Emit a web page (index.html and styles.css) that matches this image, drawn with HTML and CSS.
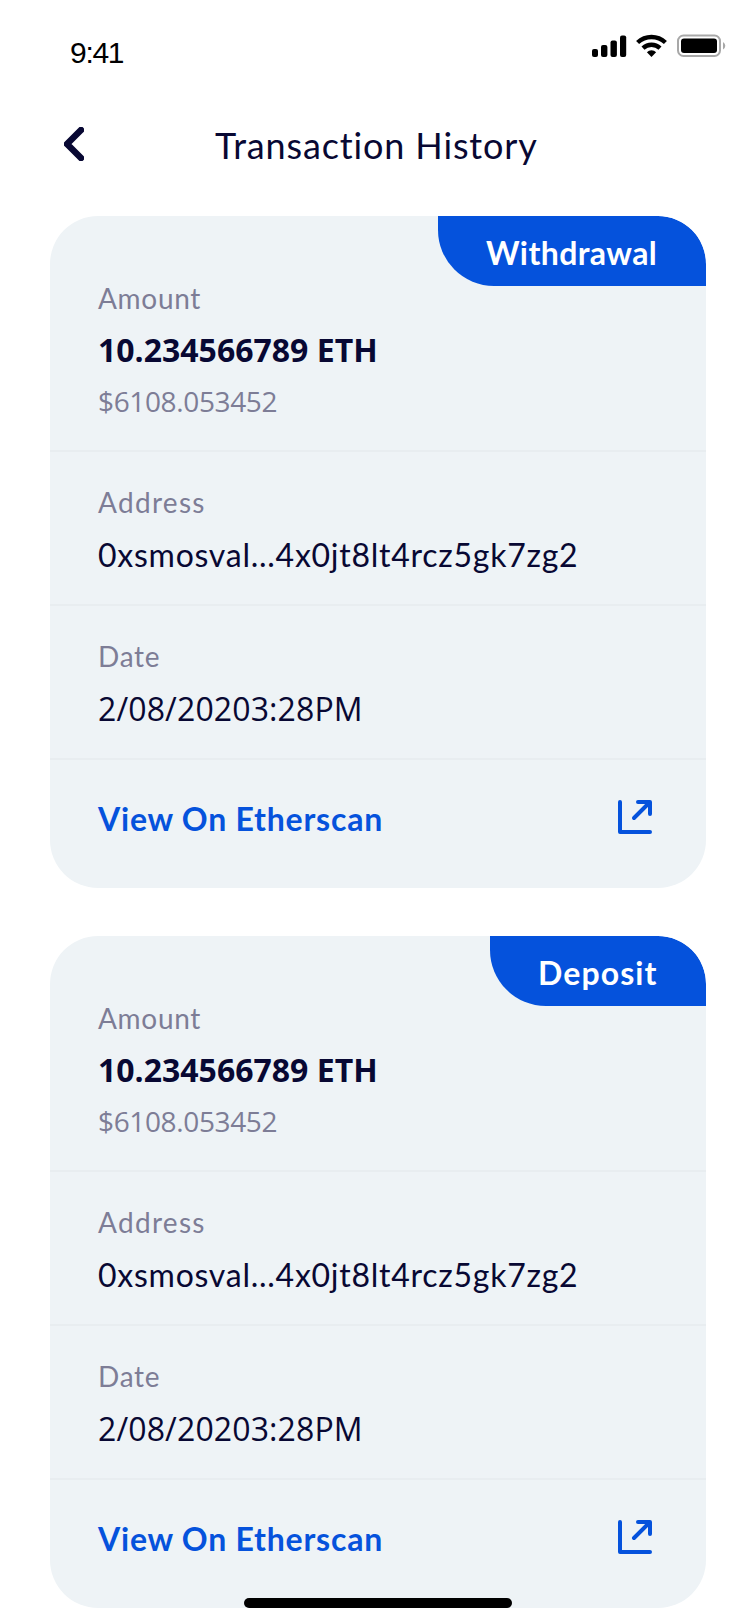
FILE: index.html
```html
<!DOCTYPE html>
<html lang="en">
<head>
<meta charset="utf-8">
<title>Transaction History</title>
<link rel="stylesheet" href="styles.css">
</head>
<body>
<div class="screen">
  <div class="status">
    <span class="time">9:41</span>
    <svg class="status-icons" width="136" height="28" viewBox="0 0 136 28">
      <rect x="2" y="17" width="6" height="8" rx="2"/>
      <rect x="11" y="13" width="6.4" height="12" rx="2"/>
      <rect x="20.5" y="8.500" width="6.4" height="16.500" rx="2"/>
      <rect x="30" y="3.500" width="6.200" height="21.500" rx="2"/>
      <g fill="none" stroke="#000" stroke-width="4.400">
        <path d="M47.600 10.500a20.300 20.300 0 0 1 27.800 0"/>
        <path d="M53 16.100a12.500 12.500 0 0 1 17 0"/>
      </g>
      <path d="M61.500 24.900l-4.600-4.700a6.500 6.500 0 0 1 9.200 0z"/>
      <rect x="88" y="3.500" width="42" height="20.500" rx="5.500" fill="none" stroke="#a8a8a8" stroke-width="2"/>
      <rect x="91" y="6.500" width="36" height="14.500" rx="3"/>
      <path d="M133 10q2.300 1.500 2.300 3.800t-2.300 3.800z" fill="#a8a8a8"/>
    </svg>
  </div>
  <header class="header">
    <svg class="back" width="20" height="34" viewBox="0 0 20 34"><path d="M17 3L3 17l14 14"/></svg>
    <h1 class="title">Transaction History</h1>
  </header>
  <main class="list">
    <article class="card">
      <div class="tag withdrawal">Withdrawal</div>
      <section class="row amount">
        <div class="label l-amount">Amount</div>
        <div class="value eth">10.234566789 ETH</div>
        <div class="fiat">$6108.053452</div>
      </section>
      <section class="row">
        <div class="label l-address">Address</div>
        <div class="value address">0xsmosval...4x0jt8lt4rcz5gk7zg2</div>
      </section>
      <section class="row">
        <div class="label l-date">Date</div>
        <div class="value date">2/08/20203:28PM</div>
      </section>
      <section class="link">
        <span class="link-text">View On Etherscan</span>
        <svg class="open" width="34" height="34" viewBox="0 0 34 34"><path d="M2 2v30h30M20 2h12v12M31 3L16 18"/></svg>
      </section>
    </article>
    <article class="card">
      <div class="tag deposit">Deposit</div>
      <section class="row amount">
        <div class="label l-amount">Amount</div>
        <div class="value eth">10.234566789 ETH</div>
        <div class="fiat">$6108.053452</div>
      </section>
      <section class="row">
        <div class="label l-address">Address</div>
        <div class="value address">0xsmosval...4x0jt8lt4rcz5gk7zg2</div>
      </section>
      <section class="row">
        <div class="label l-date">Date</div>
        <div class="value date">2/08/20203:28PM</div>
      </section>
      <section class="link">
        <span class="link-text">View On Etherscan</span>
        <svg class="open" width="34" height="34" viewBox="0 0 34 34"><path d="M2 2v30h30M20 2h12v12M31 3L16 18"/></svg>
      </section>
    </article>
  </main>
  <div class="home"></div>
</div>
</body>
</html>
```
FILE: styles.css
```css
* { box-sizing: border-box; }
body { margin: 0; background: #fff; }
.screen {
  position: relative;
  width: 752px;
  height: 1624px;
  overflow: hidden;
  color: #080833;
  font-family: Lato, "Open Sans", sans-serif;
  white-space: nowrap;
}
.status {
  display: flex;
  justify-content: space-between;
  height: 88px;
  padding: 32px 26px 0 70px;
}
.time {
  margin-top: 3px;
  color: #000;
  font: 30px/36px "Liberation Sans", sans-serif;
  letter-spacing: -1.3px;
}
.status-icons { display: block; }
.header {
  display: flex;
  align-items: flex-start;
  height: 128px;
  padding: 39px 64px 0;
}
.back, .open {
  display: block;
  fill: none;
  stroke: #080833;
  stroke-width: 6.5;
  stroke-linecap: round;
  stroke-linejoin: round;
}
.title {
  margin: -4px 0 0 131px;
  font-size: 36px;
  font-weight: 400;
  line-height: 44px;
  letter-spacing: 0.86px;
}
.list {
  display: flex;
  flex-direction: column;
  gap: 48px;
  padding: 0 46px 0 50px;
}
.card {
  position: relative;
  height: 672px;
  overflow: hidden;
  background: #eef3f6;
  border-radius: 48px;
}
.tag {
  position: absolute;
  top: 0;
  right: 0;
  height: 70px;
  padding: 16px 0 0 48px;
  color: #fff;
  background: #0552dc;
  border-radius: 0 48px 0 56px;
  font-size: 32px;
  font-weight: 700;
  line-height: 42px;
}
.withdrawal { width: 268px; letter-spacing: 0.4px; }
.deposit { width: 216px; letter-spacing: 1.1px; }
.row {
  height: 154px;
  padding: 33px 48px 0;
  border-bottom: 2px solid #e8edf0;
}
.amount { height: 236px; padding-top: 65px; }
.label, .fiat {
  color: #7d7d96;
  font-size: 28px;
  line-height: 34px;
}
.value {
  margin-top: 16px;
  font-size: 32px;
  line-height: 40px;
}
.l-amount { letter-spacing: 0.7px; }
.l-address { letter-spacing: 1.3px; }
.l-date { letter-spacing: 0.7px; }
.eth {
  margin-top: 15px;
  font-family: "Open Sans", sans-serif;
  font-weight: 700;
  letter-spacing: 0;
}
.fiat {
  margin-top: 14px;
  font-family: "Open Sans", sans-serif;
  letter-spacing: -0.36px;
}
.address { letter-spacing: 0.74px; }
.date { font-family: "Open Sans", sans-serif; letter-spacing: 0.12px; }
.link {
  display: flex;
  justify-content: space-between;
  padding: 38px 54px 0 48px;
}
.link-text {
  padding-top: 1px;
  color: #0552dc;
  font-size: 32px;
  font-weight: 700;
  line-height: 40px;
  letter-spacing: 0.77px;
}
.open {
  margin-top: 2px;
  stroke: #0552dc;
  stroke-width: 4;
}
.home {
  position: absolute;
  left: 244px;
  top: 1598px;
  width: 268px;
  height: 10px;
  border-radius: 5px;
  background: #000;
}
```
